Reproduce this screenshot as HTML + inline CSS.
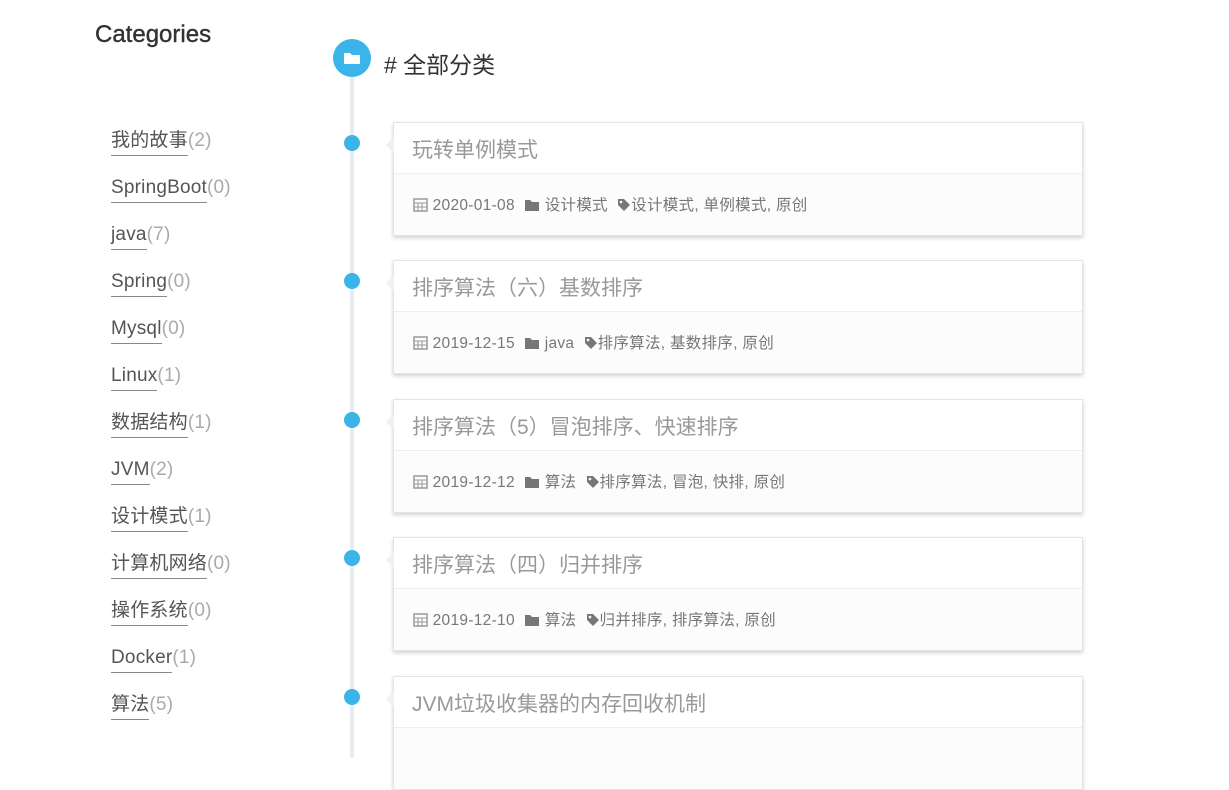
<!DOCTYPE html><html><head><meta charset="utf-8"><style>
body{margin:0;background:#fff;font-family:"Liberation Sans","Noto Sans CJK SC",sans-serif;width:1229px;height:726px;overflow:hidden;position:relative}
.h{position:absolute;left:95px;top:21px;font-size:24px;color:#333;-webkit-text-stroke:0.4px #333}
.cat{position:absolute;left:111px;font-size:19px;color:#555;line-height:24px;letter-spacing:0.2px}
.cat span.n{color:#aaa}
.cat .u{border-bottom:1px solid #888;padding-bottom:4px}
.line{position:absolute;left:350px;top:58px;width:4px;height:700px;background:#e6ecf0}
.big{position:absolute;left:333px;top:39px;width:38px;height:38px;border-radius:50%;background:#3bb4ea}
.ht{position:absolute;left:384px;top:46px;font-size:23px;color:#333}
.dot{position:absolute;left:344px;width:16px;height:16px;border-radius:50%;background:#3bb4ea}
.card{position:absolute;left:393px;width:688px;height:112px;border:1px solid #e4e4e4;box-shadow:0 2px 4px rgba(0,0,0,.18);background:#fcfcfc}
.card:before{content:"";position:absolute;left:-8px;top:14px;border:8px solid transparent;border-left:0;border-right-color:#f0f0f0}
.t{height:50px;border-bottom:1px solid #eee;background:#fff;font-size:21px;color:#999;padding-left:18px;line-height:56px}
.m{padding-left:19px;font-size:15.5px;color:#777;line-height:64px;letter-spacing:0.3px}
.m svg{vertical-align:-2px}
</style></head><body>
<div class="h">Categories</div>
<div class="cat" style="top:129px"><span class="u">我的故事</span><span class="n">(2)</span></div>
<div class="cat" style="top:176px"><span class="u">SpringBoot</span><span class="n">(0)</span></div>
<div class="cat" style="top:223px"><span class="u">java</span><span class="n">(7)</span></div>
<div class="cat" style="top:270px"><span class="u">Spring</span><span class="n">(0)</span></div>
<div class="cat" style="top:317px"><span class="u">Mysql</span><span class="n">(0)</span></div>
<div class="cat" style="top:364px"><span class="u">Linux</span><span class="n">(1)</span></div>
<div class="cat" style="top:411px"><span class="u">数据结构</span><span class="n">(1)</span></div>
<div class="cat" style="top:458px"><span class="u">JVM</span><span class="n">(2)</span></div>
<div class="cat" style="top:505px"><span class="u">设计模式</span><span class="n">(1)</span></div>
<div class="cat" style="top:552px"><span class="u">计算机网络</span><span class="n">(0)</span></div>
<div class="cat" style="top:599px"><span class="u">操作系统</span><span class="n">(0)</span></div>
<div class="cat" style="top:646px"><span class="u">Docker</span><span class="n">(1)</span></div>
<div class="cat" style="top:693px"><span class="u">算法</span><span class="n">(5)</span></div>
<div class="line"></div>
<div class="big"><svg width="38" height="38" viewBox="0 0 38 38"><path d="M11 14h6l2 2h8v9h-16z" fill="#fff"/></svg></div>
<div class="ht"># 全部分类</div>

<div class="dot" style="top:135px"></div>
<div class="card" style="top:122px"><div class="t">玩转单例模式</div><div class="m"><svg width="15" height="15"><rect x="1" y="2" width="13" height="12" fill="none" stroke="#999" stroke-width="1.5"/><path d="M1 6h13M5 6v8M9 6v8M1 10h13" stroke="#999"/></svg> 2020-01-08 &nbsp;<svg width="16" height="14"><path d="M1 2h5l2 2h7v9H1z" fill="#777"/></svg> 设计模式 &nbsp;<svg width="14" height="14"><path d="M1 1h6l6 6-6 6-6-6z" fill="#777"/><circle cx="4" cy="4" r="1.3" fill="#fff"/></svg>设计模式, 单例模式, 原创</div></div>

<div class="dot" style="top:273px"></div>
<div class="card" style="top:260px"><div class="t">排序算法（六）基数排序</div><div class="m"><svg width="15" height="15"><rect x="1" y="2" width="13" height="12" fill="none" stroke="#999" stroke-width="1.5"/><path d="M1 6h13M5 6v8M9 6v8M1 10h13" stroke="#999"/></svg> 2019-12-15 &nbsp;<svg width="16" height="14"><path d="M1 2h5l2 2h7v9H1z" fill="#777"/></svg> java &nbsp;<svg width="14" height="14"><path d="M1 1h6l6 6-6 6-6-6z" fill="#777"/><circle cx="4" cy="4" r="1.3" fill="#fff"/></svg>排序算法, 基数排序, 原创</div></div>

<div class="dot" style="top:412px"></div>
<div class="card" style="top:399px"><div class="t">排序算法（5）冒泡排序、快速排序</div><div class="m"><svg width="15" height="15"><rect x="1" y="2" width="13" height="12" fill="none" stroke="#999" stroke-width="1.5"/><path d="M1 6h13M5 6v8M9 6v8M1 10h13" stroke="#999"/></svg> 2019-12-12 &nbsp;<svg width="16" height="14"><path d="M1 2h5l2 2h7v9H1z" fill="#777"/></svg> 算法 &nbsp;<svg width="14" height="14"><path d="M1 1h6l6 6-6 6-6-6z" fill="#777"/><circle cx="4" cy="4" r="1.3" fill="#fff"/></svg>排序算法, 冒泡, 快排, 原创</div></div>

<div class="dot" style="top:550px"></div>
<div class="card" style="top:537px"><div class="t">排序算法（四）归并排序</div><div class="m"><svg width="15" height="15"><rect x="1" y="2" width="13" height="12" fill="none" stroke="#999" stroke-width="1.5"/><path d="M1 6h13M5 6v8M9 6v8M1 10h13" stroke="#999"/></svg> 2019-12-10 &nbsp;<svg width="16" height="14"><path d="M1 2h5l2 2h7v9H1z" fill="#777"/></svg> 算法 &nbsp;<svg width="14" height="14"><path d="M1 1h6l6 6-6 6-6-6z" fill="#777"/><circle cx="4" cy="4" r="1.3" fill="#fff"/></svg>归并排序, 排序算法, 原创</div></div>

<div class="dot" style="top:689px"></div>
<div class="card" style="top:676px"><div class="t">JVM垃圾收集器的内存回收机制</div></div>
</body></html>
